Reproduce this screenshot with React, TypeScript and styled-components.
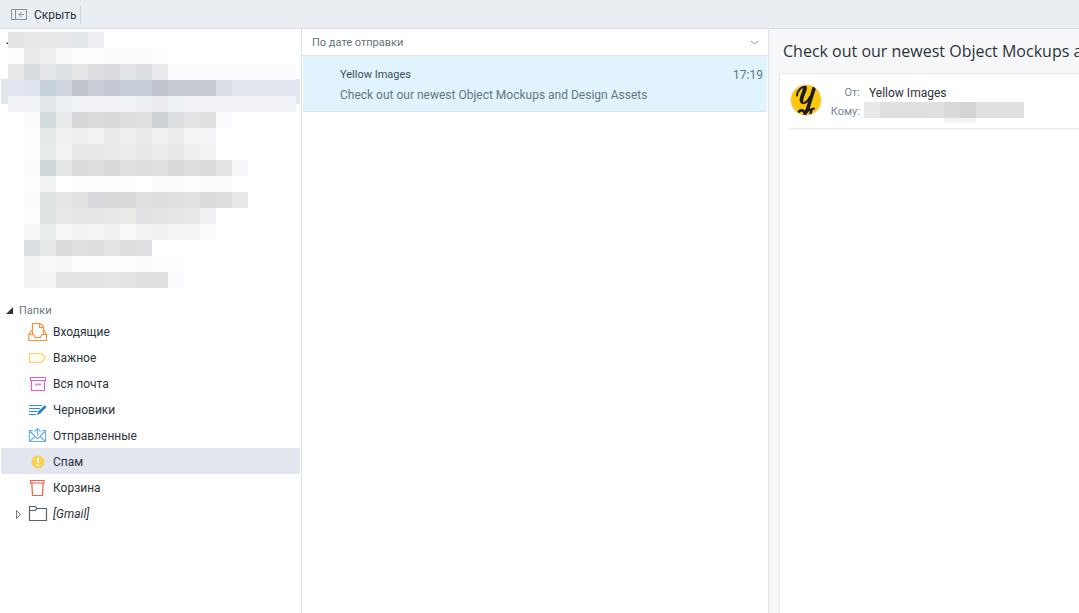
import React from "react";
import styled, { createGlobalStyle } from "styled-components";

const Global = createGlobalStyle`
  *, *::before, *::after { box-sizing: border-box; }
  html, body, #root { height: 100%; }
  body { margin: 0; background: #fff; color: #2b333b; font: 12px/16px Roboto, "Open Sans", sans-serif; overflow: hidden; }
  button { font: inherit; color: inherit; }
`;

const Shell = styled.div`
  display: flex;
  flex-direction: column;
  min-height: 100vh;
`;

const Toolbar = styled.header`
  display: flex;
  align-items: center;
  height: 29px;
  flex: none;
  padding: 0 8px;
  background: #e9eef2;
  border-bottom: 1px solid #dadfe7;
`;

const HideButton = styled.button`
  display: flex;
  align-items: center;
  gap: 7px;
  height: 18px;
  margin-top: 2px;
  padding: 0 3px;
  border: 0;
  border-right: 1px solid #cfd6dc;
  background: none;
`;

const Body = styled.div`
  display: flex;
  flex: 1;
  min-height: 0;
`;

const Sidebar = styled.nav`
  flex: 0 0 302px;
  border-right: 1px solid #dfe3ea;
  padding: 3px 1px 0;
`;

const Accounts = styled.div`
  position: relative;
  height: 270px;
`;

const ActiveAccount = styled.div`
  position: absolute;
  top: 47px;
  left: 0;
  right: 0;
  height: 25px;
  background: #e2e7ef;
`;

const AccountToggle = styled.svg`
  position: absolute;
  top: 5px;
  left: 5px;
`;

const AccountMosaic = styled.div`
  position: absolute;
  top: 0;
  left: 7px;
`;

const Heading = styled.button`
  display: flex;
  align-items: center;
  gap: 5px;
  height: 16px;
  padding: 2px 5px 0;
  border: 0;
  background: none;
  color: #6b7784;
  font-size: 11px;
`;

const FolderList = styled.ul`
  list-style: none;
  margin: 0;
  padding: 0;
`;

const FolderLink = styled.a<{ $active?: boolean; $italic?: boolean }>`
  display: grid;
  grid-template-columns: 8px 20px 1fr;
  column-gap: 5px;
  align-items: center;
  height: 26px;
  padding: 2px 0 0 14px;
  color: inherit;
  text-decoration: none;
  background: ${(p) => (p.$active ? "#e2e7ef" : "transparent")};
  font-style: ${(p) => (p.$italic ? "italic" : "normal")};
`;

const MessageList = styled.section`
  flex: 0 0 467px;
  border-right: 1px solid #dfe3ea;
`;

const SortButton = styled.button`
  display: flex;
  justify-content: space-between;
  align-items: center;
  width: 100%;
  height: 27px;
  padding: 2px 9px 0 10px;
  border: 0;
  border-bottom: 1px solid #dfe3ea;
  background: #fff;
  color: #66727e;
  font-size: 11px;
`;

const Message = styled.a`
  display: grid;
  grid-template-columns: 1fr auto;
  align-content: start;
  row-gap: 4px;
  height: 56px;
  margin: 0 1px;
  padding: 11px 4px 0 37px;
  background: #e1f4fe;
  border-bottom: 1px solid #d2e7f1;
  color: #5f7887;
  text-decoration: none;
`;

const Sender = styled.span`
  color: #414e59;
  font-size: 11px;
`;

const Subject = styled.span`
  grid-column: 1 / -1;
`;

const Reader = styled.main`
  flex: 1;
  min-width: 0;
  display: flex;
  flex-direction: column;
  padding: 11px 0 0 10px;
  background: #f5f7f9;
`;

const Title = styled.h1`
  margin: 0;
  padding-left: 4px;
  font-family: "Open Sans", "Noto Sans", sans-serif;
  font-size: 16px;
  line-height: 22px;
  font-weight: 400;
  white-space: nowrap;
  overflow: hidden;
`;

const Card = styled.article`
  flex: 1;
  margin-top: 11px;
  padding: 0 0 0 10px;
  background: #fff;
  border: 1px solid #e3e6ec;
  border-width: 1px 0 0 1px;
  border-top-left-radius: 3px;
`;

const Envelope = styled.header`
  display: flex;
  gap: 8px;
  height: 55px;
  padding-top: 9px;
  border-bottom: 1px solid #e6e9ed;
`;

const Fields = styled.dl`
  display: grid;
  grid-template-columns: 30px 1fr;
  grid-auto-rows: 19px;
  column-gap: 4px;
  margin: 0;
`;

const Label = styled.dt`
  color: #7a8791;
  font-size: 11px;
  text-align: right;
  line-height: 20px;
`;

const Value = styled.dd`
  margin: 0;
  padding-left: 5px;
  line-height: 20px;
`;

const HiddenValue = styled.dd`
  margin: 0;
`;

const CELL = 16;

type Run = { x: number; y: number; colors: string[] };

function Mosaic({ runs, width, height }: { runs: Run[]; width: number; height: number }) {
  return (
    <svg width={width} height={height} shapeRendering="crispEdges" aria-hidden="true" display="block">
      {runs.map((run) =>
        run.colors.map((fill, i) => (
          <rect key={`${run.y}-${i}`} x={run.x + i * CELL} y={run.y} width={CELL} height={CELL} fill={fill} />
        ))
      )}
    </svg>
  );
}

const row = (index: number, column: number, colors: string): Run => ({
  x: column * CELL,
  y: index * CELL,
  colors: colors.split(" ").map((c) => `#${c}`),
});

const accountRuns: Run[] = [
  row(0, 0, "e3e5e4 e7e8e9 e7e8e9 e7e8e9 e1e6e9 eeeff0"),
  row(1, 0, "fdfdfd e9ebec edefee f9fbfa fdfdfd fdfdfd fcfcfc fcfcfc fcfcfc fdfdfd"),
  row(2, 0, "e8e8e9 d7dddf e5e6e8 dce0e2 e5e5e6 dddee0 dadbde e2e3e5 dcdde1 e9eaeb fafbfd fafbfd fafbfd fafbfd fafbfd fafbfd fafbfd fafbfd"),
  row(3, 0, "e0e5ef dfe4ec c6d0d9 d2d6df c1c5ce c8ccd5 c4c8d2 c5cdd7 c6cfd8 c0c4cd c8cbd4 c8cbd4 c8cbd4 dadee7 e1e5ee e1e5ee e1e5ee e1e5ee"),
  row(4, 0, "f0f2f6 f0f2f6 e3e7eb ecf0f4 f0f2f6 f0f2f6 f0f2f6 f0f2f6 edeff3 ecedf1 edf2f6 f0f2f6 f0f2f6 f0f2f6 f0f2f6 f0f2f6 f0f2f6 f0f2f6"),
  row(5, 1, "fcfcfc d4dbdd e8ebe9 d7d8d9 dbdcde d9dadb dddee0 dfdfdf cdd2d5 dcdddf e2e3e5 dfe0df fbfcfe"),
  row(6, 1, "fefefe e4e9e9 f1f1f1 edefee f2f4f3 ebebeb edeeed e8eaec f1f1f1 ececec f4f4f4 f2f4f6"),
  row(7, 1, "fdfdfd e8edec f3f3f3 e8e8e8 e6e8ea ebebeb ebeceb e7e9eb ebedef e8eae9 eeeeee f2f2f2"),
  row(8, 1, "fcfcfc d0d8db e5e8e6 dadbdd dddee0 d8d9db dfe0e2 dcdddf dedfe1 d7d9da dcdee0 dbdcdd e2e3e4 f5f7f9"),
  row(9, 1, "fefefe f1f4f3 ffffff fefefc fefefe fdfefe fdfefe ffffff fbfbfb fcfcfc fefefe fbfbfb fcfcfc"),
  row(10, 1, "fcfcfc dde2e2 e6e8e7 e1e3e2 d8dade d8dad9 d7d9da dedfe1 dcdddf dddfe0 e1e1e1 dadbdd dcdee0 e8e8e8"),
  row(11, 1, "fefefe dee4e3 e9e9e9 e4e5e7 e5e6e8 e8eae9 eaecea dfe1e3 e4e4e4 e5e7e8 e9e9ea eff1f3"),
  row(12, 1, "f5f7f6 e9eeee f7f7f7 f2f2f2 f4f4f4 f0f0f0 f9f9f9 f1f3f5 f0f0f0 f3f4f4 f4f6f5 fcfcfc"),
  row(13, 1, "d9dee3 e7eae8 dbdcde dfdfdf dddedf e3e3e4 dddee0 dfe0e2"),
  row(14, 1, "f0f3f2 f9fafa f7f9f8 fefefe fdfdfd fdfdfd fdfdfd fcfcfc fdfdfd fefefe"),
  row(15, 1, "f1f4f3 f2f5f4 e4e4e4 e2e3e5 e1e3e4 e6e7e6 e1e3e4 dfdfdf dfe0e2 fbfcfe"),
];

const recipientRuns: Run[] = [
  row(0, 0, "e8e8e9 dedfe0 dedfe0 dfdfe1 e0e0e1 d9dadb d3d4d6 dfe0df e0e0e1 e0e0e1"),
  row(1, 5, "f3f3f3 f3f3f3"),
];

const icon = {
  width: 20,
  height: 20,
  viewBox: "0 0 20 20",
  fill: "none",
  strokeWidth: 1.2,
  "aria-hidden": true,
} as const;

const InboxIcon = () => (
  <svg {...icon} stroke="#f5923e">
    <path d="M4.500 12.500V1.500h8l3 3v8M11.500 1.500v4h4" />
    <path d="M4 8 .8 12.500v6h17.700v-6L16 8M.8 12.500H5.500l1.500 3h5.500l1.500-3h4.500" />
  </svg>
);
const ImportantIcon = () => (
  <svg {...icon} stroke="#fbd35e">
    <path d="M1.500 5.500h12l4 4.500-4 4.500h-12z" fill="#fffbf0" />
  </svg>
);
const ArchiveIcon = () => (
  <svg {...icon} stroke="#e75bc6">
    <path d="M2.500 3.500h15v3h-15zM3.500 6.500v10h13v-10" />
    <path d="M7 10.500h6" strokeWidth="2" opacity=".7" />
  </svg>
);
const DraftsIcon = () => (
  <svg {...icon} stroke="#2f8fd8">
    <path d="M1 5.500h13M1 8.500h11M1 11.500h8.500M1 14.500h7" />
    <path d="m9 15 1.200-3.500 6.300-6.300 2.200 1.800-6.500 6.600z" fill="#2580cc" stroke="none" />
  </svg>
);
const SentIcon = () => (
  <svg {...icon} stroke="#68b2ee">
    <path d="M5 4.500H1.500v11h16v-11H14M1.500 4.500 7 10.500l-5.500 5M17.500 4.500 12 10.500l5.500 5M7 10.500l2.500 2 2.500-2M9.500 9.500V2.500M6.500 5.500l3-3 3 3" />
  </svg>
);
const SpamIcon = () => (
  <svg {...icon}>
    <circle cx="10" cy="10" r="6.500" fill="#fdd04f" />
    <path d="M10 6v5M10 12v2" stroke="#fff" strokeWidth="2" />
  </svg>
);
const TrashIcon = () => (
  <svg {...icon} stroke="#ee5f48">
    <path d="M2.500 2.500h13.500v2.500H2.500zM3.800 5l.7 12.500h10l.7-12.500" />
  </svg>
);
const FolderIcon = () => (
  <svg {...icon} stroke="#546570">
    <path d="M1.500 16.500v-14H7l2 2h9.500v12zM1.500 6.500H7l2-2" />
  </svg>
);

const folders = [
  { name: "Входящие", Icon: InboxIcon },
  { name: "Важное", Icon: ImportantIcon },
  { name: "Вся почта", Icon: ArchiveIcon },
  { name: "Черновики", Icon: DraftsIcon },
  { name: "Отправленные", Icon: SentIcon },
  { name: "Спам", Icon: SpamIcon, active: true },
  { name: "Корзина", Icon: TrashIcon },
  { name: "[Gmail]", Icon: FolderIcon, expandable: true },
];

const Avatar = () => (
  <svg width="32" height="34" viewBox="0 0 32 34" role="img" aria-label="Yellow Images">
    <clipPath id="avatar-disc">
      <circle cx="16" cy="17" r="15" />
    </clipPath>
    <circle cx="16" cy="17" r="15.500" fill="#fdc70c" stroke="#e3e3e6" />
    <g fill="none" stroke="#1b1a1c" strokeLinecap="round" clipPath="url(#avatar-disc)">
      <path d="M7 12.500C7 8 11 4 14 4" strokeWidth="2" />
      <path d="M15 4.500c.5 3-4 9-3.500 13" strokeWidth="3.800" />
      <path d="M11 18c.5 4 6 2.500 9-4" strokeWidth="2" />
      <path d="M24.500 4 17 28" strokeWidth="3.600" />
      <path d="M17 27 14.500 32" strokeWidth="3" />
      <path d="M9 28.500c2-2.500 5-.5 6 1.500" strokeWidth="2.800" />
      <path d="M14 29c3-1.500 6-2 10-3.500" strokeWidth="2" />
      <path d="M21.500 26.500 20.500 31" strokeWidth="2.400" />
    </g>
  </svg>
);

export default function App() {
  return (
    <Shell>
      <Global />
      <Toolbar>
        <HideButton type="button">
          <svg width="16" height="12" viewBox="0 0 16 12" fill="none" stroke="#8a949c" aria-hidden="true">
            <path d="M.5.5h15v10H.5zM4.500.5v10M13 5.500H8M10.500 3 8 5.500 10.500 8" />
          </svg>
          Скрыть
        </HideButton>
      </Toolbar>
      <Body>
        <Sidebar>
          <Accounts>
            <ActiveAccount />
            <AccountToggle width="8" height="8" aria-hidden="true">
              <path d="M7 0v7H0z" fill="#333" />
            </AccountToggle>
            <AccountMosaic>
              <Mosaic runs={accountRuns} width={288} height={256} />
            </AccountMosaic>
          </Accounts>
          <Heading type="button">
            <svg width="8" height="8" aria-hidden="true">
              <path d="M7 0v7H0z" fill="#333" />
            </svg>
            Папки
          </Heading>
          <FolderList>
            {folders.map(({ name, Icon, active, expandable }) => (
              <li key={name}>
                <FolderLink href="#" $active={active} $italic={expandable}>
                  {expandable ? (
                    <svg width="8" height="10" fill="none" stroke="#777" aria-hidden="true">
                      <path d="m1.500 1.500 4 4-4 4z" />
                    </svg>
                  ) : (
                    <span />
                  )}
                  <Icon />
                  {name}
                </FolderLink>
              </li>
            ))}
          </FolderList>
        </Sidebar>
        <MessageList>
          <SortButton type="button">
            По дате отправки
            <svg width="9" height="6" fill="none" stroke="#929ca5" aria-hidden="true">
              <path d="m1 1 3.500 3L8 1" />
            </svg>
          </SortButton>
          <Message href="#">
            <Sender>Yellow Images</Sender>
            <span>17:19</span>
            <Subject>Check out our newest Object Mockups and Design Assets</Subject>
          </Message>
        </MessageList>
        <Reader>
          <Title>Check out our newest Object Mockups and Design Assets</Title>
          <Card>
            <Envelope>
              <Avatar />
              <Fields>
                <Label>От:</Label>
                <Value>Yellow Images</Value>
                <Label>Кому:</Label>
                <HiddenValue>
                  <Mosaic runs={recipientRuns} width={160} height={21} />
                </HiddenValue>
              </Fields>
            </Envelope>
          </Card>
        </Reader>
      </Body>
    </Shell>
  );
}
